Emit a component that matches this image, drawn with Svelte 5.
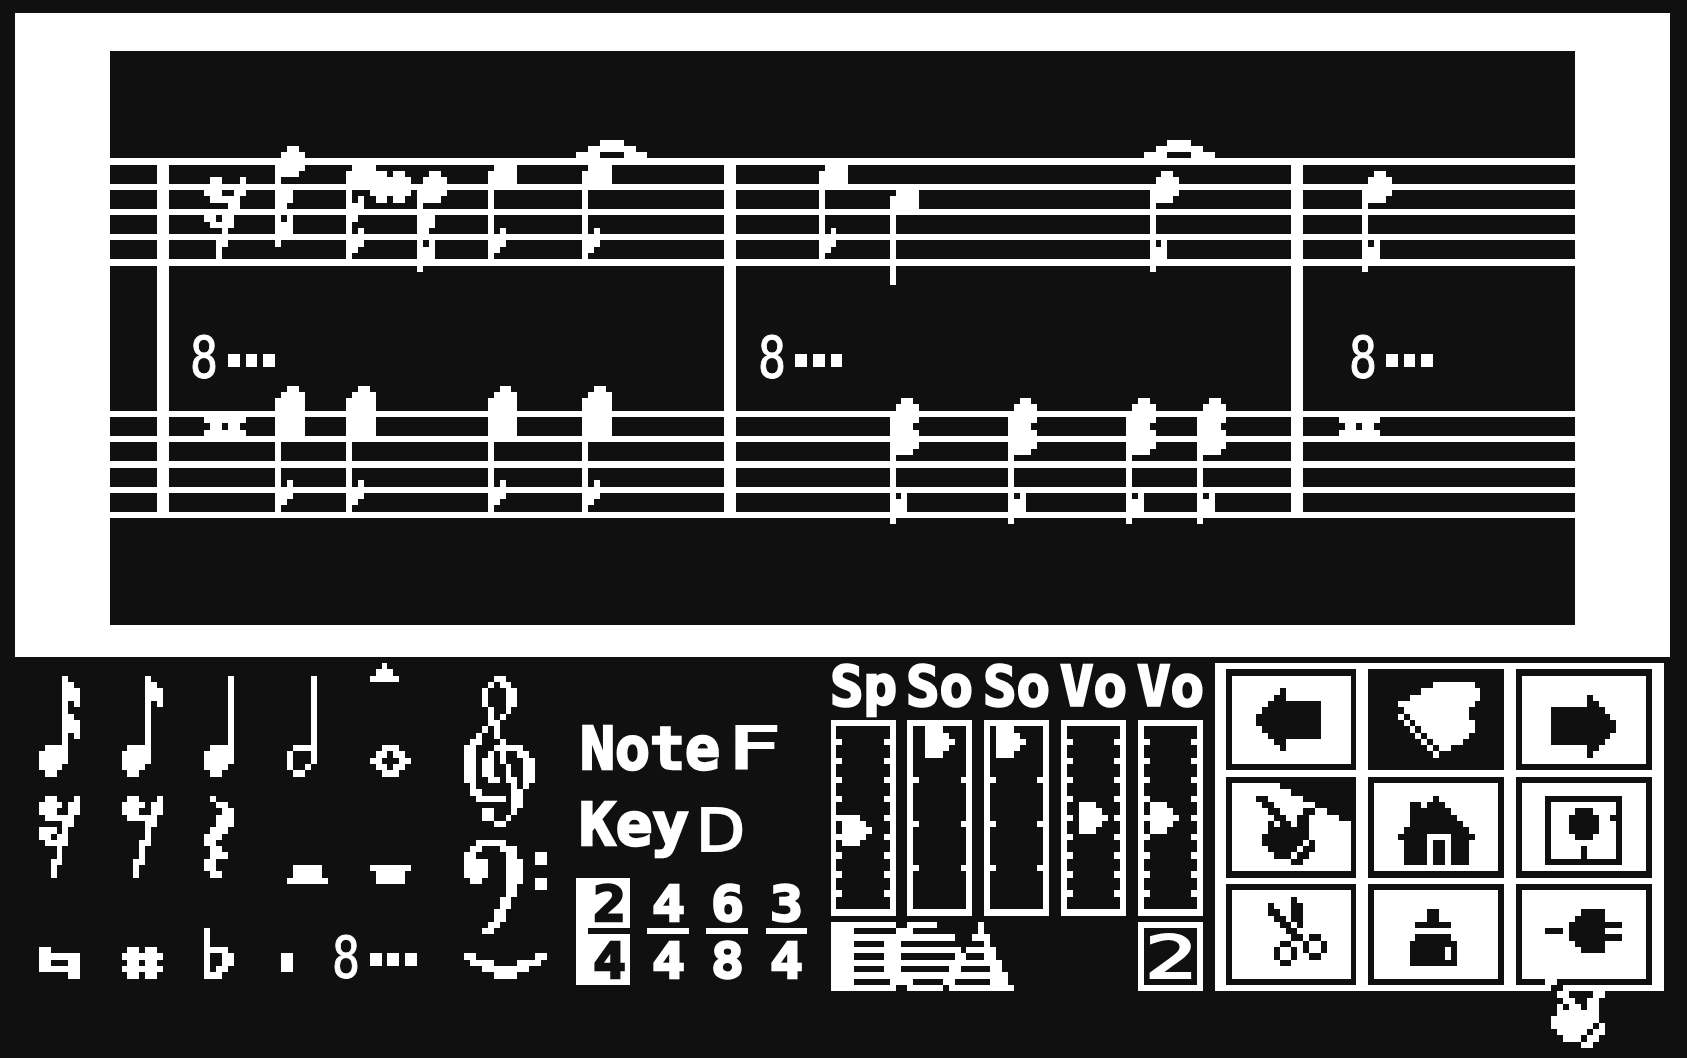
<script lang="ts">
  // The screen is a coarse bitmap: X and Y turn cell numbers into whole pixels.
  const X = (col: number) => Math.ceil(14.68 + col * 5.9085);
  const Y = (row: number) => Math.ceil(0.22 + row * 6.309);

  const cell = (c0: number, r0: number, c1: number, r1: number) =>
    `M${X(c0)} ${Y(r0)}H${X(c1)}V${Y(r1)}H${X(c0)}Z`;

  const box = (c0: number, r0: number, c1: number, r1: number) =>
    `${X(c0)} ${Y(r0)} ${X(c1) - X(c0)} ${Y(r1) - Y(r0)}`;

  // Rows of '#' cells, placed with the top left cell at (col, row).
  function sprite(rows: string[], col: number, row: number): string {
    let d = '';
    rows.forEach((line, i) => {
      for (const run of line.matchAll(/#+/g)) {
        const start = col + (run.index ?? 0);
        d += cell(start, row + i, start + run[0].length, row + i + 1);
      }
    });
    return d;
  }

  // One string of inclusive column ranges per row, e.g. "210-214 220".
  function bands(row: number, lines: string[]): string {
    let d = '';
    lines.forEach((line, i) => {
      for (const part of line.split(' ').filter(Boolean)) {
        const [a, b = a] = part.split('-').map(Number);
        d += cell(a, row + i, b + 1, row + i + 1);
      }
    });
    return d;
  }

  const times = (n: number, s: string) => Array.from({ length: n }, () => s);
  const stem = (n: number) => times(n, '#');

  const glyph = {
    rest16: ['.##...#', '####.##', '###..##', '.#####.', '....##.', '###.#..', '##.##..', '.####..', '...#...', '...#...', '..##...', '..#....', '..#....'],
    rest8: ['.##...#', '####.##', '###..##', '.#####.', '....##.', '....#..', '....#..', '...##..', '...#...', '...#...', '..##...', '..#....', '..#....'],
    rest4: ['.#...', '..##.', '...##', '..###', '..###', '.###.', '###..', '##...', '.##..', '.###.', '##...', '##...', '.##..'],
    note16: ['....#', '....##', '....###', '....###', '....#.#', '....#', '....##', '....###', '....###', '....#.#', '....#', '.####', '#####', '#####', '####', '.##'],
    note8: ['....#', '....##', '....###', '....###', '....#.#', ...times(6, '....#'), '.####', '#####', '#####', '####', '.##'],
    note4: [...times(11, '....#'), '.####', '#####', '#####', '####', '.##'],
    note2: [...times(11, '....#'), '.####', '#...#', '#...#', '#..#', '.##'],
    note1: ['..###..', '.##.##.', '##...##', '.##.##.', '..###..'],
    accent: ['..#', '.###', '#####'],
    rest2: ['.#####.', '.#####.', '#######'],
    rest1: ['#######', '.#####.', '.#####.'],
    natural: ['##', '#######', '##...##', '#######', '.....##'],
    sharp: ['.##.##.', '#######', '.##.##.', '#######', '.##.##.'],
    flat: ['#', '#', '#', '####', '#..##', '#..##', '#.##', '###'],
    dot: ['##', '##', '##'],
    dots: ['##.##.##', '##.##.##'],
    slur: ['##..........##', '.####....####', '...########', '.....####'],
    tie: ['....####', '..########', '####....####'],
    treble: [
      '.....##', '....#.##', '...#...##', '...#...##', '...#...##', '....#..#', '....#.#', '....##', '...#.#',
      '..#..#', '.##...#', '##...#####', '##..#.#..##', '##.##.#...##', '##.##..#..##', '##.##..#..##',
      '##..##.##.##', '.#......#.#', '.##.....##', '..#####.##', '........##', '...##...#', '...##..#', '.....##',
    ],
    bass: [
      '..#####', '.##...###', '##.....##...##', '####...###..##', '####...###', '####...###', '.##....###..##',
      '.......##...##', '.......##', '......##', '......##', '.....##', '.....##', '....##', '...##',
    ],
    lowEighth: ['.####', '#####', '#####', ...stem(7), '#.#', '#', '###', '##', '#'],
    longEighth: ['..##', '.####', ...times(6, '#####'), ...stem(7), '#.#', '#', '###', '##', '#'],
    lowQuarter: ['.####', '#####', '#####', ...stem(12)],
    dotted: ['..##', '.####', '#####', '#####', '####', ...stem(6), '#.#', '###', '###', '#', '#'],
    chord: ['..##', '.####', '#####', '#####', '####', '#####', '#####', '#####', '####', ...stem(6), '#.#', '###', '###', '#', '#'],
    semibreve: ['#######', '.##.##.', '#######'],
  };

  // ---- score -------------------------------------------------------------
  const staves =
    [25, 29, 33, 37, 41, 65, 69, 73, 77, 81].map((r) => cell(16, r, 264, r + 1)).join('') +
    [24, 120, 216].map((c) => cell(c, 25, c + 2, 82)).join('');

  const placed: [keyof typeof glyph, number, number][] = [
    ['rest16', 32, 28],
    ['lowEighth', 56, 26], ['lowEighth', 80, 26], ['lowEighth', 96, 26], ['lowEighth', 136, 26],
    ['lowQuarter', 148, 30],
    ['dotted', 192, 27], ['dotted', 228, 27],
    ['tie', 95, 22], ['tie', 191, 22],
    ['longEighth', 44, 61], ['longEighth', 56, 61], ['longEighth', 80, 61], ['longEighth', 96, 61],
    ['chord', 148, 63], ['chord', 168, 63], ['chord', 188, 63], ['chord', 200, 63],
    ['semibreve', 32, 66], ['semibreve', 224, 66],
    ['dots', 36, 56], ['dots', 132, 56], ['dots', 232, 56],
  ];
  const notes =
    placed.map(([g, c, r]) => sprite(glyph[g], c, r)).join('') +
    bands(23, [
      '46-47', '45-48', '', '44-48', '44-47 59-62 64-65 70-71', '44 61-66 69-72', '',
      '44-46 60-66 68-72', '44-46 58 61-62 64-65 68-71', '44-45 56-58 68', '',
      '44 46 56-57 68-70', '44-46 68-70', '44-46 68-69', '', '44 68 70', '68-70', '68-70', '', '68',
    ]);
  const octaves = [30, 126, 226];

  // ---- note palette ------------------------------------------------------
  const palette: [keyof typeof glyph, number, number][] = [
    ['note16', 4, 107], ['note8', 18, 107], ['note4', 32, 107], ['note2', 46, 107], ['accent', 60, 105], ['note1', 60, 118],
    ['rest16', 4, 126], ['rest8', 18, 126], ['rest4', 32, 126], ['rest2', 46, 137], ['rest1', 60, 137],
    ['natural', 4, 150], ['sharp', 18, 150], ['flat', 32, 147], ['dot', 45, 151], ['dots', 60, 151],
    ['treble', 76, 107], ['bass', 76, 133], ['slur', 76, 151],
  ];
  const tools = palette.map(([g, c, r]) => sprite(glyph[g], c, r)).join('');

  // ---- time signatures ---------------------------------------------------
  const meters = [
    { top: '2', bottom: '4', x: 594, line: 97, on: true },
    { top: '4', bottom: '4', x: 653, line: 107, on: false },
    { top: '6', bottom: '8', x: 712, line: 117, on: false },
    { top: '3', bottom: '4', x: 771, line: 127, on: false },
  ];

  // ---- mixer -------------------------------------------------------------
  const nine = [117, 120, 123, 126, 129, 132, 135, 138, 141];
  const three = [123, 130, 137];
  const faders = [
    { label: 'Sp', col: 138, ticks: nine, knob: [140, 129] },
    { label: 'So', col: 151, ticks: three, knob: [154, 115] },
    { label: 'So', col: 164, ticks: three, knob: [166, 115] },
    { label: 'Vo', col: 177, ticks: nine, knob: [180, 127] },
    { label: 'Vo', col: 190, ticks: nine, knob: [192, 127] },
  ];
  const frame = (c0: number, r0: number, c1: number, r1: number) =>
    cell(c0, r0, c1, r1) + cell(c0 + 1, r0 + 1, c1 - 1, r1 - 1);
  const knob = ['###', '####', '#####', '####', '###'];
  const mixer = faders
    .map((f) => f.ticks.map((r) => cell(f.col + 1, r, f.col + 2, r + 1) + cell(f.col + 9, r, f.col + 10, r + 1)).join('') +
      sprite(knob, f.knob[0], f.knob[1]))
    .join('');
  const piano = bands(146, [
    '138-148 151-155 163', '138-141 149-151 163', '138-158 162-164', '138-141 147-149 164',
    '138-159 161-165', '138-141 147-149 159-160 164-165', '138-166', '138-141 147-149 158-159 165-166',
    '138-167', '138-141 148-151 157-158 165-167', '138-148 151-156 158-168',
  ]);

  // ---- command buttons ---------------------------------------------------
  const colSpans = [[205, 227], [229, 252], [254, 277]];
  const rowSpans = [[106, 122], [123, 139], [140, 156]];
  const icons = [
    { name: 'back', d: bands(109, ['214', '213-214', '212-220', '211-220', '210-220', '210-220', '211-220', '212-220', '213-214', '214']) },
    { name: 'play', dark: true, d: bands(108, ['240-246', '238-247', '236-247', '234-246', '235-245', '234 236-245', '235 237-246', '236 238-246', '237 239-245', '238 240-244', '239 241-242', '240']) },
    { name: 'forward', d: bands(110, ['266', '266-267', '260-268', '260-269', '260-270', '260-270', '260-269', '260-268', '266-267', '266']) },
    { name: 'hand', d: bands(124, ['214-226', '216-226', '210-211 218-226', '211-212 220-226', '212-213 218-219 222-226', '213-214 217-218 224-226', '212 214-215 217-218', '212-218', '211-218', '211-217 219', '212-216 218-219', '213-215 217-218', '216-217']) },
    { name: 'home', d: bands(126, ['240', '236-237 239-241', '236-242', '236-243', '236-244', '235-245', '234-238 243-246', ...times(4, '235-238 240-241 243-245')]) },
    { name: 'disk', d: bands(126, ['259-271', '259 271', '259 264-266 271', '259 263-267 270-271', '259 263-267 271', '259 263-267 271', '259 264-266 271', '259 271', '259 265 271', '259 265 271', '259-271']) },
    { name: 'cut', d: bands(142, ['216', '212 216-217', '212-213 216-217', '213-214 216-217', '214-215 217', '215-216', '216-217 219-220', '214-215 218 221', '213 216 218 221', '213 216 219-220', '214-215']) },
    { name: 'bottle', d: bands(144, ['239-240', '239-240', '237-242', '', '237-242', '236-243', '236-241 243', '236-241 243', '236-243']) },
    { name: 'plug', d: bands(144, ['265-268', '264-268', '263-271', '259-261 263-268', '263-271', '264-268', '265-268']) },
  ].map((icon, i) => {
    const [c0, c1] = colSpans[i % 3];
    const [r0, r1] = rowSpans[Math.floor(i / 3)];
    return { ...icon, c0, c1, r0, r1 };
  });

  const pointerLight = bands(155, [
    '259-260', '', '261-262 267-268', '262-263 266-267', '261 263-264 266-267', '261-267', '260-267',
    '260-266 268', '261-265 267-268', '262-264 266-267', '265-266',
  ]);
  const pointerDark = bands(156, ['260-261']);
</script>

{#snippet label(text: string, x: number, y: number, width: number, size: number, kind: string)}
  <text class={kind} {x} {y} font-size={size} textLength={width} lengthAdjust="spacingAndGlyphs">{text}</text>
{/snippet}

<main>
  <section class="score">
    <svg class="sheet" width={X(264) - X(16)} height={Y(99) - Y(8)} viewBox={box(16, 8, 264, 99)}>
      <path d={staves} />
      <path d={notes} />
      {#each octaves as col}
        {@render label('8', X(col) - 2, Y(60) - 1, 28, 57, 'thin')}
      {/each}
    </svg>
  </section>

  <section class="panel">
    <svg width={X(95) - X(0)} height={Y(167) - Y(104)} viewBox={box(0, 104, 95, 167)}>
      <path d={tools} />
      {@render label('8', X(54) - 2, Y(155) - 1, 28, 57, 'thin')}
    </svg>

    <svg width={X(138) - X(95)} height={Y(167) - Y(104)} viewBox={box(95, 104, 138, 167)}>
      {@render label('Note', 580, 769, 140, 58, 'bold')}
      {@render label('F', 728, 769, 53, 58, 'plain')}
      {@render label('Key', 579, 845, 110, 58, 'bold')}
      {@render label('D', 696, 851, 49, 58, 'plain')}
      {#each meters as m}
        {#if m.on}<path d={cell(95, 139, 104, 156)} />{/if}
        <path class:ink={m.on} d={cell(m.line, 147, m.line + 7, 148)} />
        {@render label(m.top, m.x - 1, 921, 33, 50, m.on ? 'bold ink' : 'bold')}
        {@render label(m.bottom, m.x - 1, 978, 33, 50, m.on ? 'bold ink' : 'bold')}
      {/each}
    </svg>

    <svg width={X(203) - X(138)} height={Y(167) - Y(104)} viewBox={box(138, 104, 203, 167)}>
      {#each faders as f}
        {@render label(f.label, X(f.col) - 1, 705, 67, 56, 'bold')}
        <path fill-rule="evenodd" d={frame(f.col, 114, f.col + 11, 145)} />
      {/each}
      <path d={mixer} />
      <path d={piano} />
      <path fill-rule="evenodd" d={frame(190, 146, 201, 157)} />
      {@render label('2', 1145, 978, 53, 58, 'plain')}
    </svg>

    <div class="commands">
      {#each icons as icon}
        <button class={icon.name}>
          <svg width={X(icon.c1) - X(icon.c0)} height={Y(icon.r1) - Y(icon.r0)} viewBox={box(icon.c0, icon.r0, icon.c1, icon.r1)}>
            {#if !icon.dark}<path d={cell(icon.c0 + 1, icon.r0 + 1, icon.c1 - 1, icon.r1 - 1)} />{/if}
            <path class:ink={!icon.dark} d={icon.d} />
          </svg>
        </button>
      {/each}
    </div>

    <svg class="pointer" width={X(269) - X(259)} height={Y(166) - Y(155)} viewBox={box(259, 155, 269, 166)}>
      <path d={pointerLight} />
      <path class="ink" d={pointerDark} />
    </svg>
  </section>
</main>

<style>
  :global(body) {
    margin: 0;
    background: #101010;
  }

  main {
    box-sizing: border-box;
    width: 1687px;
    height: 1058px;
    padding: 13px 17px 0 15px;
    background: #101010;
  }

  svg {
    display: block;
    flex: none;
    fill: #fff;
    overflow: visible;
    shape-rendering: crispEdges;
  }

  .score {
    display: flex;
    justify-content: center;
    align-items: flex-start;
    box-sizing: border-box;
    height: 644px;
    padding-top: 38px;
    background: #fff;
  }

  .sheet {
    background: #101010;
  }

  .panel {
    position: relative;
    display: flex;
    align-items: flex-start;
    height: 401px;
  }

  .commands {
    display: grid;
    grid-template-columns: 130px 136px 136px;
    grid-template-rows: 108px 107px 101px;
    column-gap: 12px;
    align-items: start;
    box-sizing: border-box;
    width: 449px;
    height: 328px;
    margin-top: 6px;
    padding: 6px 12px 6px 11px;
    background: #fff;
  }

  .commands button {
    display: block;
    padding: 0;
    border: 0;
    background: #101010;
  }

  .pointer {
    position: absolute;
    left: 1530px;
    top: 322px;
  }

  .bold {
    font-family: 'DejaVu Sans Mono', monospace;
    font-weight: 700;
    stroke: #fff;
    stroke-width: 2.4px;
    stroke-linejoin: miter;
  }

  .plain {
    font-family: 'DejaVu Sans', sans-serif;
    stroke: #fff;
    stroke-width: 2px;
  }

  .thin {
    font-family: 'DejaVu Sans Mono', monospace;
    stroke: #fff;
    stroke-width: 1px;
  }

  .ink {
    fill: #101010;
  }

  text.ink {
    stroke: #101010;
  }
</style>
